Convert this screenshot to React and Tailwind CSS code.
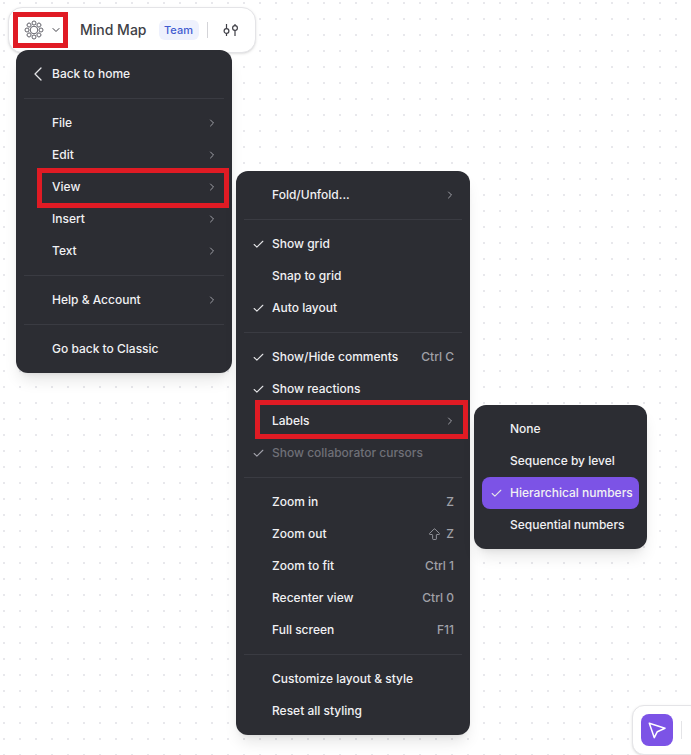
import { Check, ChevronLeft, ChevronRight, ChevronDown, ArrowBigUp } from 'lucide-react';

const fileMenu = [
  [{ label: 'File', sub: true }, { label: 'Edit', sub: true }, { label: 'View', sub: true }, { label: 'Insert', sub: true }, { label: 'Text', sub: true }],
  [{ label: 'Help & Account', sub: true }],
  [{ label: 'Go back to Classic' }],
];

const viewMenu = [
  [{ label: 'Fold/Unfold...', sub: true }],
  [{ label: 'Show grid', checked: true }, { label: 'Snap to grid' }, { label: 'Auto layout', checked: true }],
  [
    { label: 'Show/Hide comments', checked: true, hint: 'Ctrl C' },
    { label: 'Show reactions', checked: true },
    { label: 'Labels', sub: true },
    { label: 'Show collaborator cursors', checked: true, disabled: true },
  ],
  [
    { label: 'Zoom in', hint: 'Z' },
    { label: 'Zoom out', hint: 'Z', shift: true },
    { label: 'Zoom to fit', hint: 'Ctrl 1' },
    { label: 'Recenter view', hint: 'Ctrl 0' },
    { label: 'Full screen', hint: 'F11' },
  ],
  [{ label: 'Customize layout & style' }, { label: 'Reset all styling' }],
];

function GearIcon() {
  const petals = [0, 45, 90, 135, 180, 225, 270, 315];
  return (
    <svg width="20" height="20" viewBox="0 0 20 20" fill="none" stroke="#52525b" strokeWidth="0.9">
      {petals.map((a) => (
        <circle key={a} cx="10" cy="3" r="2" transform={`rotate(${a} 10 10)`} />
      ))}
      <circle cx="10" cy="10" r="3.8" />
    </svg>
  );
}

function MenuRow({ item }) {
  return (
    <div className={`flex h-8 items-center rounded-lg text-xs font-medium ${item.disabled ? 'text-[#6f7078]' : 'text-[#f1f1f3]'}`}>
      <span className="flex w-7 shrink-0 justify-center">
        {item.checked && <Check size={13} strokeWidth={2} className={item.disabled ? 'text-[#a1a1aa]' : 'text-[#e4e4e7]'} />}
      </span>
      <span className="flex-1 whitespace-nowrap">{item.label}</span>
      {item.hint && (
        <span className="flex items-center gap-1 pr-2 text-[#a0a1a8]">
          {item.shift && <ArrowBigUp size={15} strokeWidth={1.4} />}
          {item.hint}
        </span>
      )}
      {item.sub && <ChevronRight size={12} strokeWidth={2} className="mr-1.5 text-[#a0a1a8]" />}
    </div>
  );
}

function MenuGroups({ groups }) {
  return groups.map((group, i) => (
    <div key={i}>
      {i > 0 && <div className="my-2 h-px bg-[#3a3b42]" />}
      {group.map((item) => (
        <MenuRow key={item.label} item={item} />
      ))}
    </div>
  ));
}

export default function App() {
  return (
    <div className="relative h-[755px] w-[691px] overflow-hidden bg-white bg-[radial-gradient(#e8e8ec_1px,transparent_1px)] bg-[length:16px_16px] bg-[position:-4px_-5px] font-['Inter',sans-serif]">
      {/* top toolbar */}
      <div className="absolute left-2 top-[7px] flex h-[46px] w-[248px] items-center rounded-[14px] border border-[#e4e4e7] bg-white pl-[15px] shadow-sm">
        <GearIcon />
        <ChevronDown size={12} strokeWidth={2} className="ml-1.5 text-[#3f3f46]" />
        <span className="ml-[18px] text-sm font-medium text-[#3f3f46]">Mind Map</span>
        <span className="ml-3 flex h-5 w-10 items-center justify-center rounded-md bg-[#eef1fd] text-[11px] font-medium text-[#3f5bd0]">Team</span>
        <span className="ml-2 h-4 w-px bg-[#d4d4d8]" />
        <svg className="ml-[14px]" width="18" height="16" viewBox="0 0 18 16" fill="none" stroke="#3f3f46" strokeWidth="1.2">
          <circle cx="4.5" cy="9" r="2.4" />
          <path d="M4.5 2v4.6M4.5 11.4V14" />
          <circle cx="13" cy="6" r="2.4" />
          <path d="M13 2v1.6M13 8.4V14" />
        </svg>
      </div>

      {/* file menu */}
      <div className="absolute left-4 top-[50px] w-[216px] rounded-xl bg-[#2c2d33] p-2 shadow-lg">
        <div className="flex h-8 items-center text-xs font-medium text-[#f1f1f3]">
          <span className="flex w-7 justify-center">
            <ChevronLeft size={24} strokeWidth={1.3} className="text-[#e4e4e7]" />
          </span>
          Back to home
        </div>
        <div className="my-2 h-px bg-[#3a3b42]" />
        <MenuGroups groups={fileMenu} />
      </div>

      {/* view submenu */}
      <div className="absolute left-[236px] top-[171px] w-[234px] rounded-xl bg-[#2c2d33] p-2 shadow-lg">
        <MenuGroups groups={viewMenu} />
      </div>

      {/* labels submenu */}
      <div className="absolute left-[474px] top-[405px] w-[173px] rounded-xl bg-[#2c2d33] p-2 shadow-lg">
        <MenuRow item={{ label: 'None' }} />
        <MenuRow item={{ label: 'Sequence by level' }} />
        <div className="rounded-lg bg-[#7c53e6]">
          <MenuRow item={{ label: 'Hierarchical numbers', checked: true }} />
        </div>
        <MenuRow item={{ label: 'Sequential numbers' }} />
      </div>

      {/* red annotation boxes */}
      <div className="absolute left-[13px] top-3 h-9 w-[55px] border-[5px] border-[#e01b24]" />
      <div className="absolute left-[37px] top-[168px] h-10 w-[192px] border-[5px] border-[#e01b24]" />
      <div className="absolute left-[255px] top-[400px] h-[39px] w-[213px] border-[5px] border-[#e01b24]" />

      {/* bottom right tool */}
      <div className="absolute left-[632px] top-[705px] flex h-[50px] w-[70px] items-center rounded-xl border border-[#e4e4e7] bg-white pl-2 shadow-sm">
        <span className="flex h-8 w-8 items-center justify-center rounded-lg bg-[#7c53e6]">
          <svg width="18" height="18" viewBox="0 0 18 18" fill="none" stroke="white" strokeWidth="1.5" strokeLinejoin="round">
            <path d="M1.3 2.3 17 7.3 9.3 10.7 6.3 16.7Z" />
          </svg>
        </span>
        <span className="ml-2 h-[18px] w-px bg-[#e4e4e7]" />
      </div>
    </div>
  );
}
